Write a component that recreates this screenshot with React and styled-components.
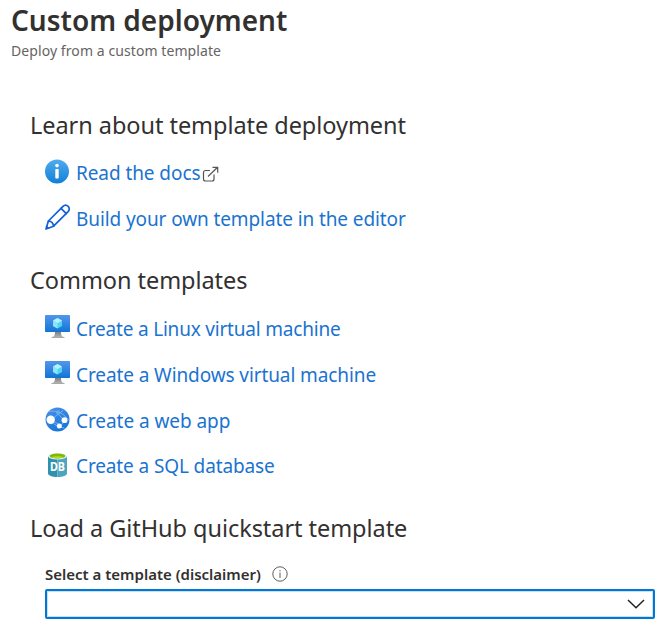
import React from "react";
import styled, { createGlobalStyle } from "styled-components";

const GlobalStyle = createGlobalStyle`
  *, *::before, *::after { box-sizing: border-box; }
  body {
    margin: 0;
    background: #fff;
    color: #323130;
    font-family: "Noto Sans", "Open Sans", sans-serif;
  }
`;

const Page = styled.main`
  display: flex;
  flex-direction: column;
  height: 636px;
  overflow: hidden;
`;

const Header = styled.header`
  padding: 0 11px;
  height: 107px;
`;

const Title = styled.h1`
  margin: 0;
  font-size: 28px;
  font-weight: 600;
  line-height: 40px;
  white-space: nowrap;
`;

const Subtitle = styled.p`
  margin: 0;
  color: #666462;
  font-size: 14px;
  line-height: 21px;
  letter-spacing: 0.08px;
`;

const Section = styled.section`
  padding: 0 8px 0 29px;
  margin-bottom: ${(p) => p.$gap || 0}px;
`;

const Heading = styled.h2`
  margin: 0 0 ${(p) => p.$gap}px;
  padding-left: 1px;
  font-size: 23.5px;
  font-weight: 400;
  line-height: 36px;
  letter-spacing: -0.05px;
  white-space: nowrap;
`;

const LinkList = styled.ul`
  margin: 0;
  padding: 0 0 0 16px;
  list-style: none;
`;

const LinkRow = styled.li`
  display: flex;
  align-items: center;
  height: ${(p) => p.$height || 46}px;
`;

const IconSlot = styled.span`
  display: flex;
  flex: none;
  width: 31px;
  margin-top: ${(p) => p.$lift || -3}px;
  svg { display: block; }
`;

const Link = styled.a`
  color: #1a73cf;
  font-size: 19px;
  line-height: 26px;
  letter-spacing: ${(p) => p.$tracking || 0}px;
  text-decoration: none;
  white-space: nowrap;
`;

const ExternalIcon = styled.svg`
  margin: 2px 0 0 2px;
`;

const Field = styled.div`
  padding-left: 16px;
`;

const Label = styled.label`
  display: flex;
  align-items: center;
  height: 30px;
  padding-bottom: 1px;
  font-size: 15px;
  font-weight: 600;
  white-space: nowrap;
  svg { margin-left: 11px; }
`;

const Select = styled.button`
  display: flex;
  align-items: center;
  justify-content: flex-end;
  width: 610px;
  height: 30px;
  padding: 0 8px;
  border: 2px solid #0078d4;
  border-radius: 2px;
  background: #fff;
  box-shadow: inset 0 0 0 1px #c7e0f4;
`;

const InfoIcon = () => (
  <svg width="25" height="25" viewBox="0 0 25 25">
    <defs>
      <linearGradient id="info" x1="0" y1="0" x2="0" y2="1">
        <stop offset="0" stopColor="#50acef" />
        <stop offset="1" stopColor="#1180d6" />
      </linearGradient>
    </defs>
    <circle cx="12" cy="12.5" r="12" fill="url(#info)" />
    <circle cx="12" cy="6.6" r="1.8" fill="#fff" />
    <rect x="10.3" y="10" width="3.4" height="9.500" rx="0.7" fill="#fff" />
  </svg>
);

const PencilIcon = () => (
  <svg width="26" height="26" viewBox="0 0 26 26" fill="none" stroke="#1160d8" strokeWidth="1.7" strokeLinejoin="round" strokeLinecap="round">
    <path d="M1 25l2.4-8L18 2.400c1.600-1.600 3.800-1.400 5.200 0s1.500 3.600-.1 5.200L8.600 22.200z" />
    <path d="M3.400 17c2.800.3 4.900 2.400 5.200 5.200M16 4.400l5.300 5.300" />
    <path d="M1.600 22.500L3 24.100" />
  </svg>
);

const MachineIcon = ({ id }) => (
  <svg width="26" height="25" viewBox="0 0 26 25">
    <defs>
      <linearGradient id={`${id}-screen`} x1="0" y1="1" x2="0" y2="0">
        <stop offset="0" stopColor="#1175d6" />
        <stop offset="1" stopColor="#5396eb" />
      </linearGradient>
      <linearGradient id={`${id}-stand`} x1="0" y1="0" x2="0" y2="1">
        <stop offset="0" stopColor="#777" />
        <stop offset="1" stopColor="#b8b8b8" />
      </linearGradient>
    </defs>
    <path d="M10 17h6c0 4 .4 5.500 3 6v.8H7V23c2.600-.5 3-2 3-6z" fill={`url(#${id}-stand)`} />
    <path d="M6.500 23h13v1h-13z" fill="#aaa" />
    <rect y="1" width="25" height="17" rx="0.7" fill={`url(#${id}-screen)`} />
    <path d="M12.500 4l4.500 2.600v5.300L12.500 14.500 8 11.900V6.600z" fill="#50d5f3" />
    <path d="M12.500 4L17 6.600l-4.500 2.700L8 6.600z" fill="#b6f0fc" />
    <path d="M12.500 9.300v5.200L8 11.900V6.600z" fill="#8ce5f8" />
  </svg>
);

const WebAppIcon = () => (
  <svg width="25" height="25" viewBox="0 0 25 25">
    <defs>
      <linearGradient id="globe" x1="0" y1="0" x2="0.5" y2="1">
        <stop offset="0" stopColor="#4a91e8" />
        <stop offset="1" stopColor="#1978d8" />
      </linearGradient>
      <clipPath id="globe-clip"><circle cx="12.500" cy="12.500" r="12" /></clipPath>
    </defs>
    <circle cx="12.500" cy="12.500" r="12" fill="url(#globe)" />
    <g clipPath="url(#globe-clip)" fill="none" stroke="#83b6ef" strokeWidth="0.9">
      <path d="M3 4.500c6-1 14-.5 21 9M5.500 13L18 3.500M5.500 13c3 4 7 7 14 8M12 5.500l7.500 8.500M6 13l10 5.500 3.500-5" />
    </g>
    <circle cx="5.700" cy="12.700" r="4.200" fill="#fff" />
    <circle cx="13" cy="5.300" r="2" fill="#69adf0" />
    <circle cx="19.500" cy="13.200" r="2.900" fill="#fff" />
    <circle cx="14.300" cy="19" r="2.500" fill="#fff" />
  </svg>
);

const DbText = styled.text`
  font: 700 11.5px "Noto Sans", sans-serif;
  fill: #fff;
`;

const DatabaseIcon = () => (
  <svg width="25" height="26" viewBox="0 0 25 26">
    <path d="M3 4v17.500c0 1.900 4.200 3.500 9.500 3.500V4z" fill="#3191ad" />
    <path d="M12.500 4v21c5.300 0 9.500-1.600 9.500-3.500V4z" fill="#4ba5c0" />
    <ellipse cx="12.500" cy="4.200" rx="9.500" ry="3.200" fill="#e3f2f5" />
    <ellipse cx="12.500" cy="4" rx="7.900" ry="2.500" fill="#7fba00" />
    <path d="M6.500 5.200c2-1.300 10-1.300 12 0-2 1.400-10 1.400-12 0z" fill="#b8d432" />
    <DbText x="12.500" y="18.700" textAnchor="middle" textLength="15" lengthAdjust="spacingAndGlyphs">DB</DbText>
  </svg>
);

export default function App() {
  return (
    <>
      <GlobalStyle />
      <Page>
        <Header>
          <Title>Custom deployment</Title>
          <Subtitle>Deploy from a custom template</Subtitle>
        </Header>

        <Section $gap={20}>
          <Heading $gap={7}>Learn about template deployment</Heading>
          <LinkList>
            <LinkRow>
              <IconSlot><InfoIcon /></IconSlot>
              <Link href="#docs" $tracking={-0.08}>Read the docs</Link>
              <ExternalIcon width="17" height="17" viewBox="0 0 17 17" fill="none" stroke="#555" strokeWidth="1.2">
                <path d="M8 4.500H3.500a2 2 0 0 0-2 2V13a2 2 0 0 0 2 2H10a2 2 0 0 0 2-2V8.500M6 10.500l9.300-9M10.500 1.300h5.200v5.400" />
              </ExternalIcon>
            </LinkRow>
            <LinkRow>
              <IconSlot $lift={-4}><PencilIcon /></IconSlot>
              <Link href="#editor" $tracking={-0.1}>Build your own template in the editor</Link>
            </LinkRow>
          </LinkList>
        </Section>

        <Section $gap={22}>
          <Heading $gap={8}>Common templates</Heading>
          <LinkList>
            <LinkRow>
              <IconSlot $lift={-5}><MachineIcon id="linux" /></IconSlot>
              <Link href="#linux" $tracking={-0.2}>Create a Linux virtual machine</Link>
            </LinkRow>
            <LinkRow>
              <IconSlot $lift={-5}><MachineIcon id="windows" /></IconSlot>
              <Link href="#windows" $tracking={-0.1}>Create a Windows virtual machine</Link>
            </LinkRow>
            <LinkRow>
              <IconSlot><WebAppIcon /></IconSlot>
              <Link href="#web" $tracking={-0.06}>Create a web app</Link>
            </LinkRow>
            <LinkRow $height={44}>
              <IconSlot><DatabaseIcon /></IconSlot>
              <Link href="#sql" $tracking={-0.12}>Create a SQL database</Link>
            </LinkRow>
          </LinkList>
        </Section>

        <Section>
          <Heading $gap={13}>Load a GitHub quickstart template</Heading>
          <Field>
            <Label htmlFor="template">
              Select a template (disclaimer)
              <svg width="16" height="16" viewBox="0 0 16 16" fill="none" stroke="#605e5c">
                <circle cx="8" cy="8" r="7.200" />
                <path d="M8 6.500v5.500M8 4v1.300" />
              </svg>
            </Label>
            <Select id="template" type="button" aria-label="Template">
              <svg width="18" height="10" viewBox="0 0 18 10" fill="none" stroke="#201f1e" strokeWidth="1.400">
                <path d="M1 1l8 7.800L17 1" />
              </svg>
            </Select>
          </Field>
        </Section>
      </Page>
    </>
  );
}
